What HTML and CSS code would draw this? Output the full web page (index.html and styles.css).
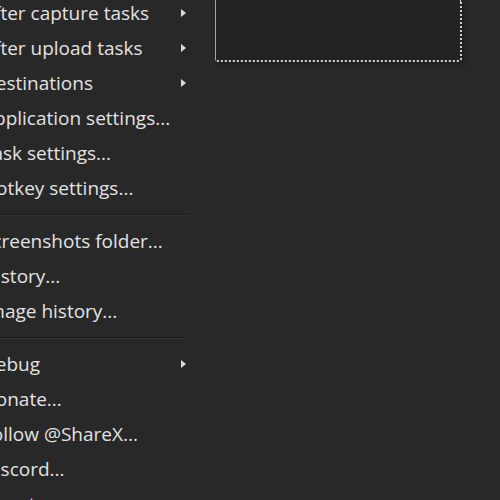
FILE: index.html
```html
<!DOCTYPE html>
<html>
<head>
<meta charset="utf-8">
<link rel="stylesheet" href="styles.css">
</head>
<body>
<div class="screen">
  <ul class="menu">
    <li class="item has-sub"><span class="label">After capture tasks</span><span class="arrow"></span></li>
    <li class="item has-sub"><span class="label">After upload tasks</span><span class="arrow"></span></li>
    <li class="item has-sub"><span class="label">Destinations</span><span class="arrow"></span></li>
    <li class="item"><span class="label">Application settings...</span></li>
    <li class="item"><span class="label">Task settings...</span></li>
    <li class="item"><span class="label">Hotkey settings...</span></li>
    <li class="sep"></li>
    <li class="item"><span class="label">Screenshots folder...</span></li>
    <li class="item"><span class="label">History...</span></li>
    <li class="item"><span class="label">Image history...</span></li>
    <li class="sep"></li>
    <li class="item has-sub"><span class="label">Debug</span><span class="arrow"></span></li>
    <li class="item"><span class="label">Donate...</span></li>
    <li class="item"><span class="label">Follow @ShareX...</span></li>
    <li class="item"><span class="label">Discord...</span></li>
    <li class="item"><span class="label">About...</span></li>
  </ul>
  <div class="preview"></div>
</div>
</body>
</html>
```
FILE: styles.css
```css
html, body {
  margin: 0;
  padding: 0;
  background: #282828;
  overflow: hidden;
}
.screen {
  width: 500px;
  height: 500px;
  display: flex;
  align-items: flex-start;
  overflow: hidden;
}
.menu {
  list-style: none;
  margin: -5px 0 0 0;
  padding: 0;
  width: 190px;
  flex: none;
  font-family: "Open Sans", "Noto Sans", sans-serif;
  font-size: 19px;
  color: #e2e2e2;
}
.item {
  height: 35px;
  display: flex;
  align-items: center;
  justify-content: space-between;
  white-space: nowrap;
}
.label {
  margin-left: -18px;
}
.arrow {
  width: 0;
  height: 0;
  border-top: 4.5px solid transparent;
  border-bottom: 4.5px solid transparent;
  border-left: 5px solid #dadada;
  margin-right: 4px;
}
.sep {
  height: 18px;
  display: flex;
  align-items: center;
}
.sep::before {
  content: "";
  display: block;
  width: 188px;
  height: 1px;
  background: #1c1c1c;
  box-shadow: 0 1px 0 #333333;
}
.preview {
  margin-left: 25px;
  width: 244px;
  height: 60px;
  flex: none;
  background: #232323;
  border-left: 1px solid #a4a4a4;
  border-right: 2px dotted #d0d0d0;
  border-bottom: 2px dotted #d0d0d0;
  border-bottom-left-radius: 3px;
  border-bottom-right-radius: 3px;
  box-shadow: 3px 2px 4px rgba(0,0,0,0.25);
}
```
